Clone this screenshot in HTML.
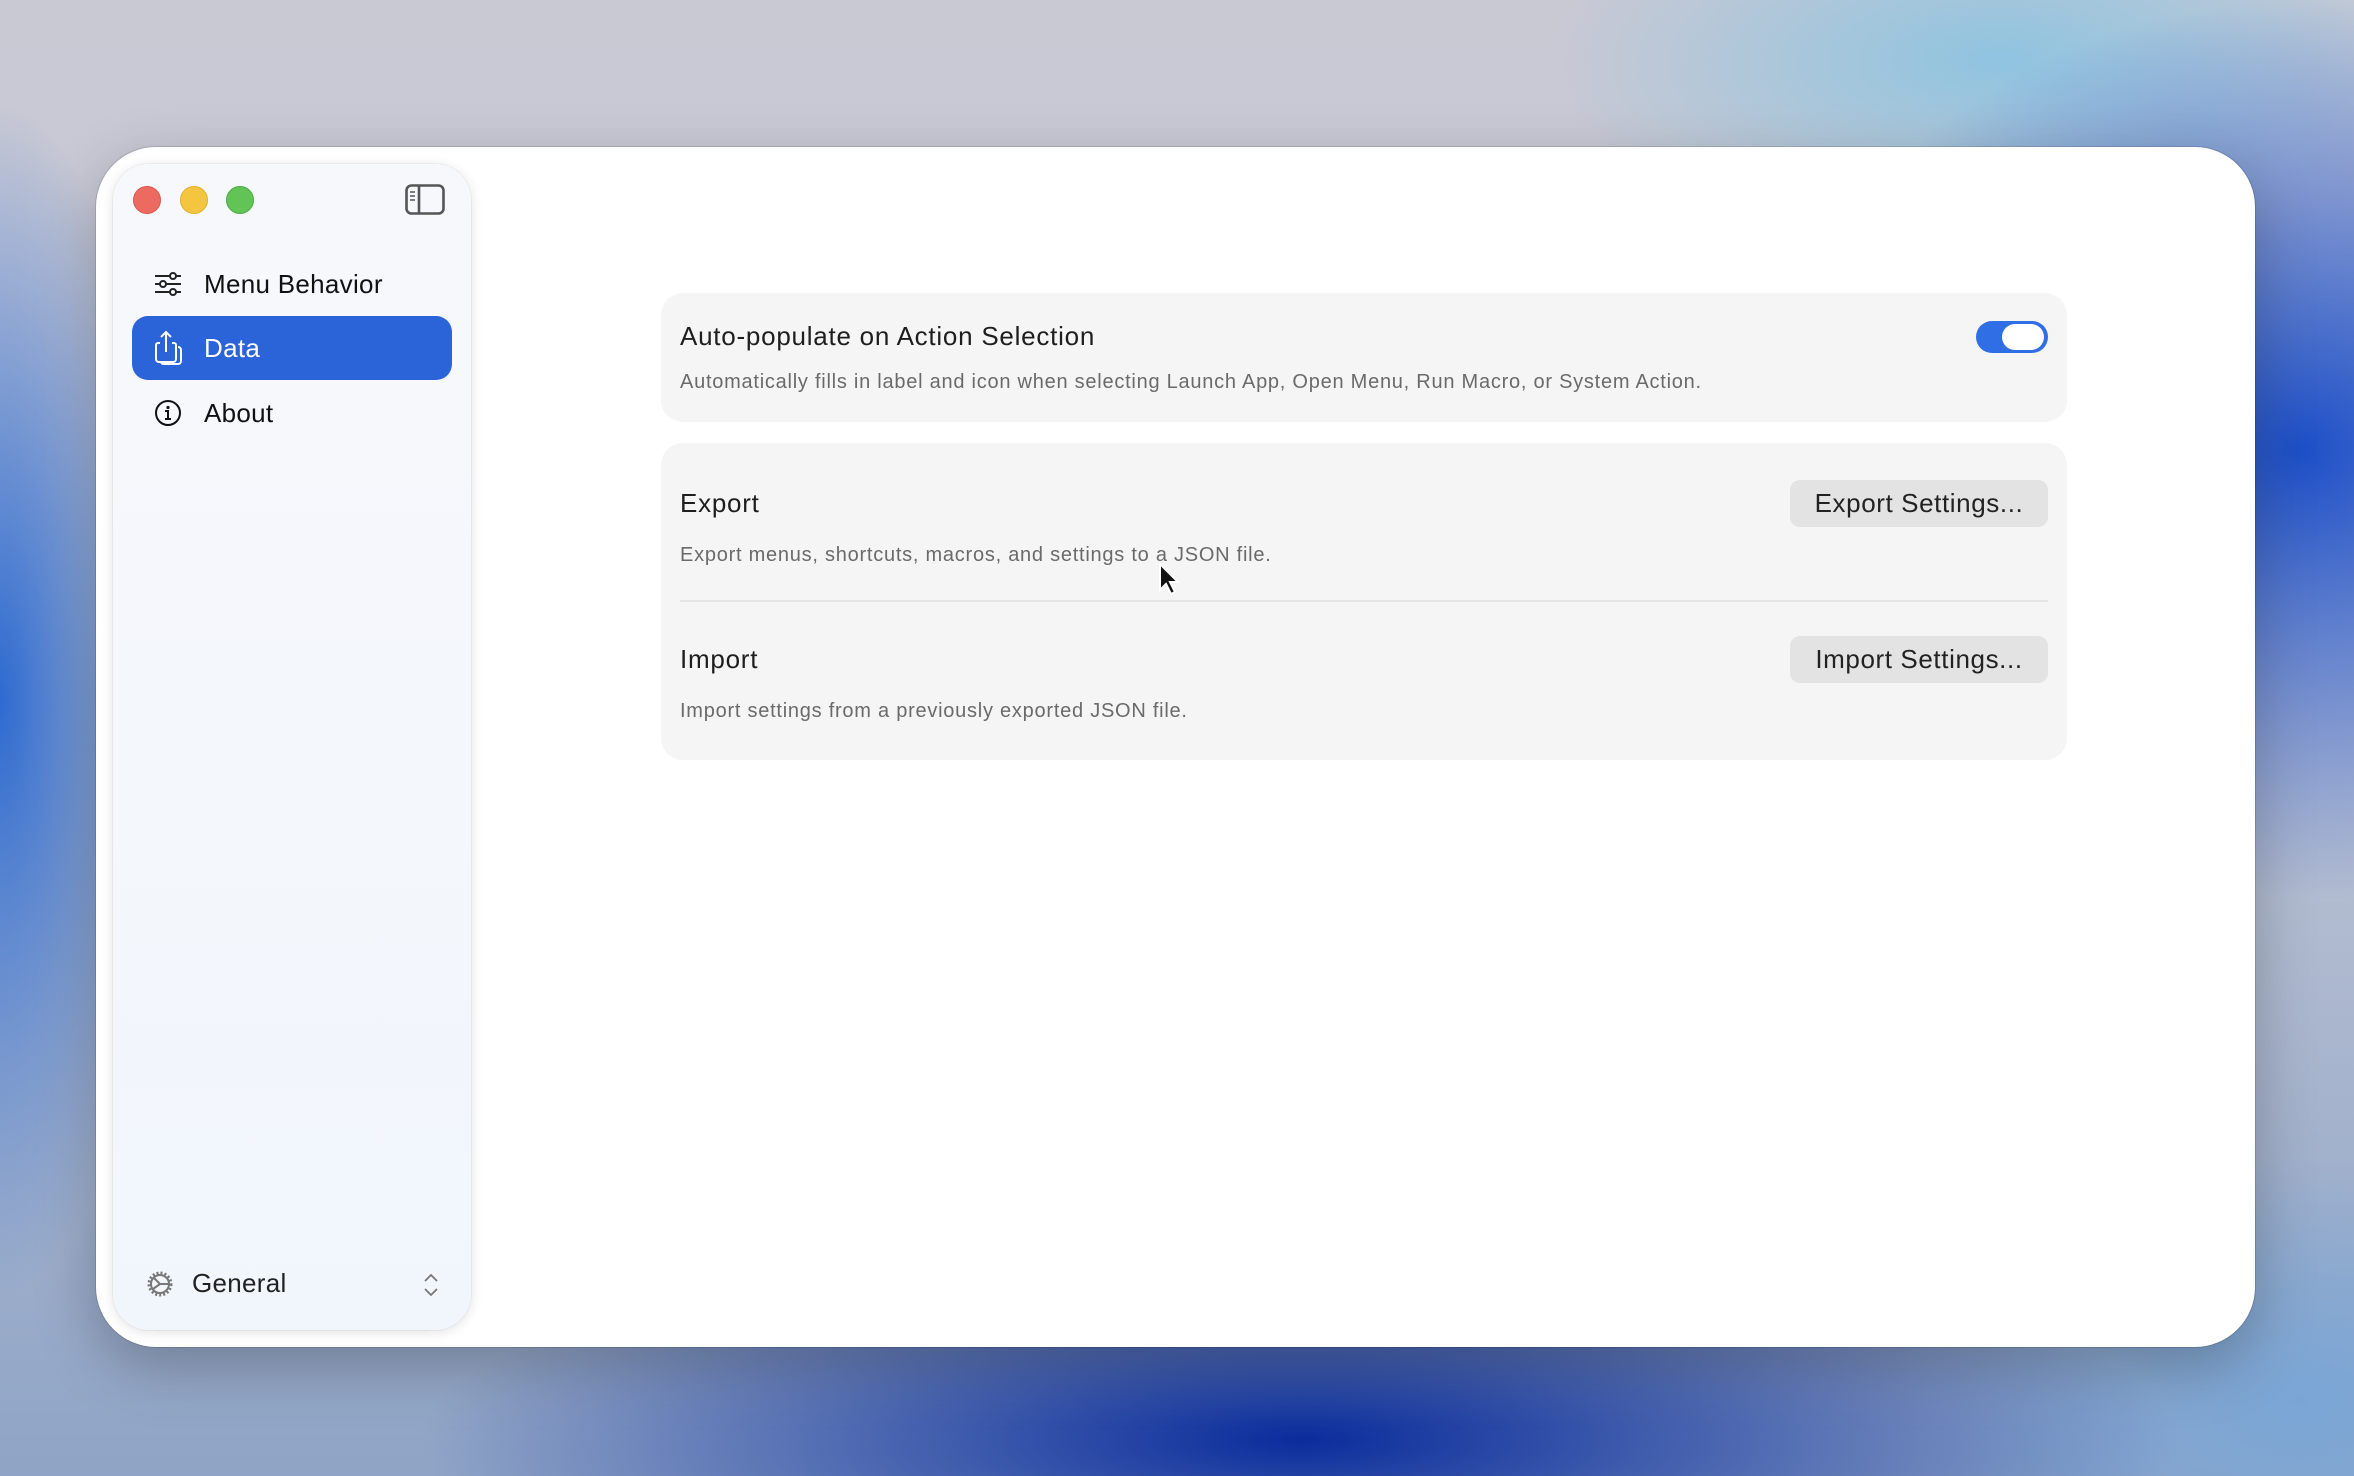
<!DOCTYPE html>
<html><head><meta charset="utf-8"><style>
*{margin:0;padding:0;box-sizing:border-box}
html,body{width:2354px;height:1476px;overflow:hidden}
body{position:relative;font-family:"Liberation Sans",sans-serif;
background:
radial-gradient(ellipse 700px 600px at 2300px 450px,#1d4fc8 0%,rgba(29,79,200,0) 75%),
radial-gradient(ellipse 600px 250px at 2000px 60px,#8fc4e0 0%,rgba(143,196,224,0) 75%),
radial-gradient(ellipse 1100px 260px at 1300px 1440px,#0a2c9c 0%,rgba(10,44,156,0) 80%),
radial-gradient(ellipse 200px 700px at 0px 700px,#2d6ad0 0%,rgba(45,106,208,0) 85%),
radial-gradient(ellipse 500px 300px at 2300px 1400px,#7aa6d6 0%,rgba(122,166,214,0) 80%),
linear-gradient(180deg,#c9c9d4 0%,#c4c8d6 40%,#8fa4c6 100%);}
.win{position:absolute;left:96px;top:147px;width:2159px;height:1200px;background:#fff;border-radius:60px;box-shadow:0 0 0 1px rgba(0,0,0,.12),0 20px 60px rgba(0,0,0,.25)}
.side{position:absolute;left:113px;top:164px;width:358px;height:1166px;border-radius:36px;background:linear-gradient(180deg,#f7f8fb 0%,#f1f6fd 100%);box-shadow:0 2px 12px rgba(0,0,0,.12),0 0 0 1px rgba(0,0,0,.04)}
.tl{position:absolute;top:186px;width:28px;height:28px;border-radius:50%}
.item{position:absolute;left:132px;width:320px;height:64px;font-size:26px;color:#111;display:flex;align-items:center;letter-spacing:.3px}
.item span{position:absolute;left:72px}
.item svg{position:absolute;left:22px}
.sel{background:#2b64d9;border-radius:16px;color:#fff}
.card{position:absolute;left:661px;width:1406px;background:#f5f5f5;border-radius:22px}
.t{position:absolute;left:19px;font-size:26px;color:#1e1e1e;letter-spacing:.75px}
.d{position:absolute;left:19px;font-size:20px;color:#6a6a6a;letter-spacing:.75px}
.btn{position:absolute;left:1129px;width:258px;height:47px;background:#e3e3e3;border-radius:10px;font-size:26px;color:#222;text-align:center;line-height:47px;letter-spacing:.6px}
</style></head><body>
<div class="win"></div>
<div class="side"></div>
<div class="tl" style="left:133px;background:#ec6a5f;border:1px solid #d9564c"></div>
<div class="tl" style="left:180px;background:#f4c53f;border:1px solid #dfae2d"></div>
<div class="tl" style="left:226px;background:#61c454;border:1px solid #4ead43"></div>
<svg style="position:absolute;left:405px;top:184px" width="40" height="32" viewBox="0 0 40 32"><rect x="1.5" y="1.5" width="37" height="28" rx="5" fill="none" stroke="#555" stroke-width="2.6"/><line x1="14" y1="2" x2="14" y2="29" stroke="#555" stroke-width="2.6"/><path d="M5 8h5M5 12h5M5 16h5" stroke="#555" stroke-width="1.6"/></svg>
<div class="item" style="top:252px"><svg width="28" height="24" viewBox="0 0 28 24"><path d="M1 4h26M1 12h26M1 20h26" stroke="#222" stroke-width="2"/><circle cx="19" cy="4" r="3" fill="#f7f8fb" stroke="#222" stroke-width="2"/><circle cx="9" cy="12" r="3" fill="#f7f8fb" stroke="#222" stroke-width="2"/><circle cx="19" cy="20" r="3" fill="#f7f8fb" stroke="#222" stroke-width="2"/></svg><span>Menu Behavior</span></div>
<div class="item sel" style="top:316px"><svg width="30" height="36" viewBox="0 0 30 36"><path d="M6 13H4a2 2 0 0 0-2 2v14a3 3 0 0 0 3 3h14a3 3 0 0 0 3-3V15a2 2 0 0 0-2-2h-2" fill="none" stroke="#fff" stroke-width="2"/><path d="M12 22V2M7 7l5-5 5 5" fill="none" stroke="#fff" stroke-width="2"/><path d="M24 17a3 3 0 0 1 3 3v11a3 3 0 0 1-3 3H10a3 3 0 0 1-3-2" fill="none" stroke="#fff" stroke-width="2"/></svg><span style="font-weight:500">Data</span></div>
<div class="item" style="top:381px"><svg width="28" height="28" viewBox="0 0 28 28"><circle cx="14" cy="14" r="12" fill="none" stroke="#111" stroke-width="2"/><circle cx="14" cy="8.5" r="1.6" fill="#111"/><path d="M11 12h3v8M11 20h6" fill="none" stroke="#111" stroke-width="2"/></svg><span>About</span></div>
<svg style="position:absolute;left:145px;top:1269px" width="30" height="30" viewBox="0 0 30 30"><circle cx="15" cy="15" r="11" fill="none" stroke="#777" stroke-width="3" stroke-dasharray="2 2"/><circle cx="15" cy="15" r="9" fill="none" stroke="#777" stroke-width="2"/><path d="M15 15L9 9M15 15l-7 5M15 15h8" stroke="#777" stroke-width="2"/></svg>
<div style="position:absolute;left:192px;top:1268px;font-size:26px;color:#222;letter-spacing:.3px">General</div>
<svg style="position:absolute;left:423px;top:1273px" width="16" height="24" viewBox="0 0 16 24"><path d="M2 8l6-6 6 6M2 16l6 6 6-6" fill="none" stroke="#777" stroke-width="1.8"/></svg>

<div class="card" style="top:293px;height:129px">
<div class="t" style="top:28px">Auto-populate on Action Selection</div>
<div class="d" style="top:78px">Automatically fills in label and icon when selecting Launch App, Open Menu, Run Macro, or System Action.</div>
<div style="position:absolute;left:1315px;top:28px;width:72px;height:32px;border-radius:16px;background:#2f6ee5"><div style="position:absolute;right:4px;top:3px;width:42px;height:26px;border-radius:13px;background:#fff"></div></div>
</div>
<div class="card" style="top:443px;height:317px">
<div class="t" style="top:45px">Export</div>
<div class="btn" style="top:37px">Export Settings...</div>
<div class="d" style="top:101px">Export menus, shortcuts, macros, and settings to a JSON file.</div>
<div style="position:absolute;left:19px;top:157px;width:1368px;height:2px;background:#e6e6e6"></div>
<div class="t" style="top:201px">Import</div>
<div class="btn" style="top:193px">Import Settings...</div>
<div class="d" style="top:257px">Import settings from a previously exported JSON file.</div>
</div>
<svg style="position:absolute;left:1158px;top:562px" width="22" height="34" viewBox="0 0 22 34"><path d="M2 2v26l6-6 5 10 4-2-5-10h8z" fill="#111" stroke="#fff" stroke-width="2"/></svg>
</body></html>
